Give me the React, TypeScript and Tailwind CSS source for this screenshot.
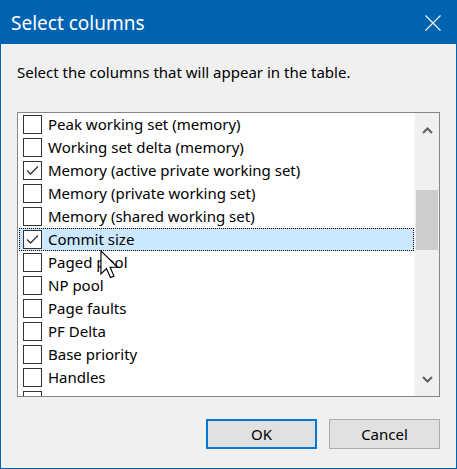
import React from 'react';

const rows = [
  { label: 'Peak working set (memory)', checked: false },
  { label: 'Working set delta (memory)', checked: false },
  { label: 'Memory (active private working set)', checked: true },
  { label: 'Memory (private working set)', checked: false },
  { label: 'Memory (shared working set)', checked: false },
  { label: 'Commit size', checked: true, selected: true },
  { label: 'Paged pool', checked: false },
  { label: 'NP pool', checked: false },
  { label: 'Page faults', checked: false },
  { label: 'PF Delta', checked: false },
  { label: 'Base priority', checked: false },
  { label: 'Handles', checked: false },
];

const font = { fontFamily: '"Noto Sans", "Liberation Sans", sans-serif' };

function CheckBox({ checked }: { checked: boolean }) {
  return (
    <div className="w-[19px] h-[19px] border border-[#333333] bg-white shrink-0 flex items-center justify-center">
      {checked && (
        <svg width="17" height="17" viewBox="0 0 17 17" fill="none">
          <path d="M3 8.5 L6.5 12 L14 4.5" stroke="#333333" strokeWidth="1.3" />
        </svg>
      )}
    </div>
  );
}

function Row({ label, checked, selected }: { label: string; checked: boolean; selected?: boolean }) {
  return (
    <div
      className={`h-[23px] flex items-center gap-[6px] pl-[5px] ${
        selected ? 'bg-[#cce8ff] outline-1 outline-dotted outline-black -outline-offset-1 ml-px' : ''
      }`}
    >
      <div className={selected ? '-ml-px' : ''}>
        <CheckBox checked={checked} />
      </div>
      <span className="text-[15px] leading-[23px] text-black whitespace-nowrap">{label}</span>
    </div>
  );
}

function ScrollBar() {
  return (
    <div className="w-[25px] h-full bg-[#f0f0f0] flex flex-col border-l border-[#f4f8fc]">
      <div className="h-[34px] flex items-center justify-center">
        <svg width="11" height="7" viewBox="0 0 11 7" fill="none">
          <path d="M1 6 L5.5 1.5 L10 6" stroke="#606060" strokeWidth="2" />
        </svg>
      </div>
      <div className="h-[43px]" />
      <div className="h-[60px] bg-[#cdcdcd] mx-[1px]" />
      <div className="flex-1" />
      <div className="h-[34px] flex items-center justify-center">
        <svg width="11" height="7" viewBox="0 0 11 7" fill="none">
          <path d="M1 1 L5.5 5.5 L10 1" stroke="#606060" strokeWidth="2" />
        </svg>
      </div>
    </div>
  );
}

export default function App() {
  return (
    <div
      className="relative w-[457px] h-[469px] flex flex-col border-x border-b border-[#0063b1] bg-[#f0f0f0]"
      style={font}
    >
      {/* Title bar */}
      <div className="h-[44px] shrink-0 bg-[#0063b1] flex items-center justify-between pl-[11px] pr-[16px] pt-[2px] -mx-px">
        <span className="text-[19px] text-white">Select columns</span>
        <svg width="16" height="16" viewBox="0 0 16 16" fill="none">
          <path d="M0.5 0.5 L15.5 15.5 M15.5 0.5 L0.5 15.5" stroke="#ffffff" strokeWidth="1.1" />
        </svg>
      </div>

      {/* Body */}
      <div className="flex-1 flex flex-col px-[16px]">
        <p className="mt-[18px] text-[15px] leading-[20px] text-black">
          Select the columns that will appear in the table.
        </p>

        <div className="mt-[30px] h-[285px] border border-[#828790] bg-white flex">
          <div className="flex-1 overflow-hidden">
            {rows.map((r) => (
              <Row key={r.label} label={r.label} checked={r.checked} selected={r.selected} />
            ))}
            {/* next row, scrolled mostly out of view */}
            <div className="h-[23px] flex items-start pt-[2px] pl-[5px]">
              <CheckBox checked={false} />
            </div>
          </div>
          <ScrollBar />
        </div>

        <div className="mt-[22px] flex justify-end gap-[12px]">
          <button className="w-[111px] h-[30px] bg-[#e1e1e1] border-2 border-[#0078d7] text-[15px] text-black">
            OK
          </button>
          <button className="w-[111px] h-[30px] bg-[#e1e1e1] border border-[#adadad] text-[15px] text-black">
            Cancel
          </button>
        </div>
      </div>

      {/* mouse pointer */}
      <svg
        className="absolute left-[99px] top-[250px]"
        width="19"
        height="29"
        viewBox="0 0 13 20"
        fill="none"
      >
        <path
          d="M0.6 0.6 L0.6 16.5 L4.4 12.8 L7.2 19 L9.6 18 L6.9 11.9 L12 11.9 Z"
          fill="#ffffff"
          stroke="#000000"
          strokeWidth="0.8"
          strokeLinejoin="miter"
        />
      </svg>
    </div>
  );
}
